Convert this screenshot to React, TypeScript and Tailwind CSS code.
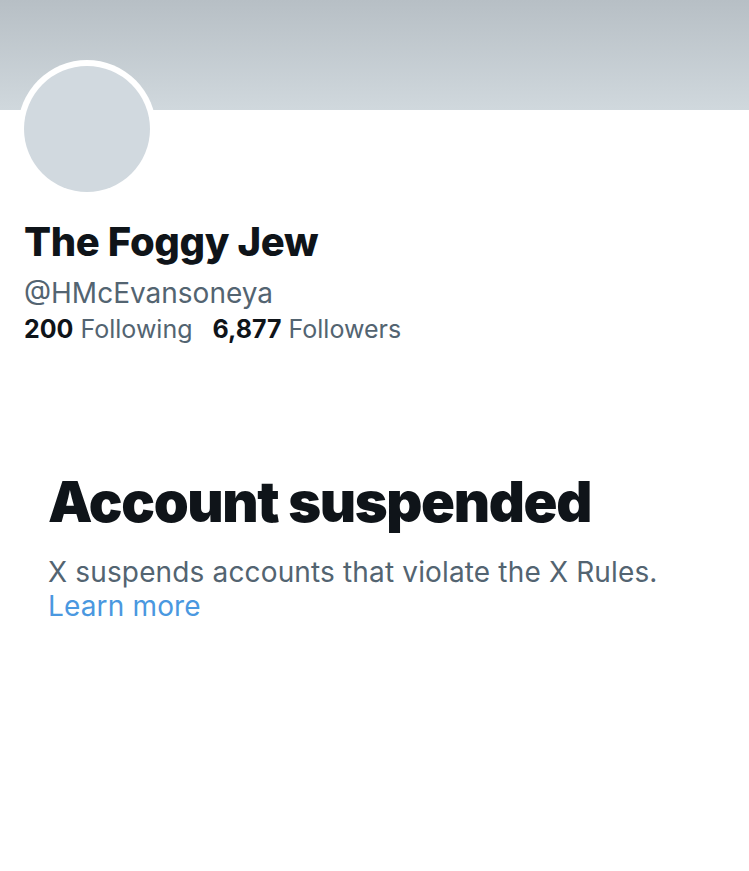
export default function App() {
  return (
    <div className="min-h-[871px] w-full bg-white font-['Inter',sans-serif] text-[#0f1419]">
      {/* banner */}
      <div className="h-[110px] w-full bg-gradient-to-b from-[#b7bfc5] to-[#d0d8dd]" />

      {/* avatar */}
      <div className="-mt-[50px] ml-[18px] h-[138px] w-[138px] rounded-full bg-white p-[6px]">
        <div className="h-full w-full rounded-full bg-[#d1d9df]" />
      </div>

      <div className="px-6 pt-[20px]">
        <h1 className="text-[40px] font-extrabold leading-[48px] tracking-[-0.35px]">The Foggy Jew</h1>
        <div className="mt-[6px] text-[28px] leading-[42px] text-[#536471]">@HMcEvansoneya</div>
        <div className="flex gap-5 text-[25px] leading-[30px]">
          <span>
            <span className="font-bold">200</span>{" "}
            <span className="text-[#536471]">Following</span>
          </span>
          <span>
            <span className="font-bold">6,877</span>{" "}
            <span className="text-[#536471]">Followers</span>
          </span>
        </div>
      </div>

      <div className="px-12 pt-[126px]">
        <h2 className="text-[56px] font-black leading-[64px] tracking-[-1.35px]">Account suspended</h2>
        <p className="mt-[21px] text-[28px] leading-[34px] tracking-[0.15px] text-[#536471]">
          X suspends accounts that violate the X Rules.
          <br />
          <a className="text-[#4a98e0]" href="#">
            Learn more
          </a>
        </p>
      </div>
    </div>
  );
}
